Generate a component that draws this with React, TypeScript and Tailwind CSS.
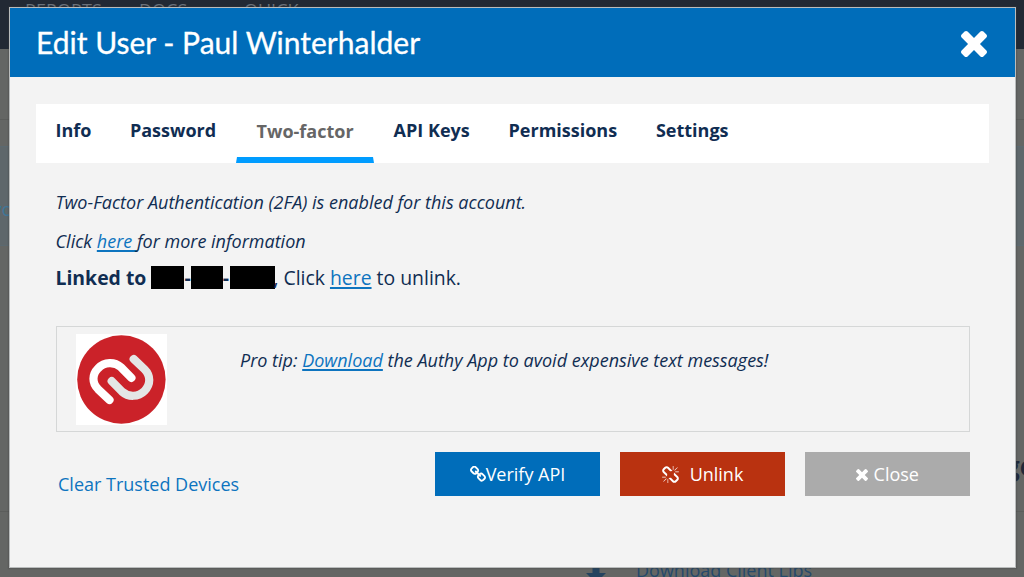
import type { ReactNode } from "react";

const TIMES =
  "M1490 1322q0 40-28 68l-136 136q-28 28-68 28t-68-28l-294-294-294 294q-28 28-68 28t-68-28l-136-136q-28-28-28-68t28-68l294-294-294-294q-28-28-28-68t28-68l136-136q28-28 68-28t68 28l294 294 294-294q28-28 68-28t68 28l136 136q28 28 28 68t-28 68l-294 294 294 294q28 28 28 68z";
const CHAIN =
  "M1520 1216q0-40-28-68l-208-208q-28-28-68-28-42 0-72 32 3 3 19 18.5t21.5 21.5 15 19 13 25.5 3.5 27.5q0 40-28 68t-68 28q-15 0-27.5-3.5t-25.5-13-19-15-21.5-21.5-18.5-19q-33 31-33 73 0 40 28 68l206 207q27 27 68 27 40 0 68-26l147-146q28-28 28-67zm-703-705q0-40-28-68l-206-207q-28-28-68-28-39 0-68 27l-147 146q-28 28-28 67 0 40 28 68l208 208q27 27 68 27 42 0 72-31-3-3-19-18.5t-21.5-21.5-15-19-13-25.5-3.5-27.5q0-40 28-68t68-28q15 0 27.5 3.5t25.5 13 19 15 21.5 21.5 18.5 19q33-31 33-73zm895 705q0 120-85 203l-147 146q-83 83-203 83-121 0-204-85l-206-207q-83-83-83-203 0-123 88-209l-88-88q-86 88-208 88-120 0-204-84l-208-208q-84-84-84-204t85-203l147-146q83-83 203-83 121 0 204 85l206 207q83 83 83 203 0 123-88 209l88 88q86-88 208-88 120 0 204 84l208 208q84 84 84 204z";
const CHAIN_BROKEN =
  "M503 1271l-256 256q-10 9-23 9-12 0-23-9-9-10-9-23t9-23l256-256q10-9 23-9t23 9q9 10 9 23t-9 23zm169 41v320q0 14-9 23t-23 9-23-9-9-23v-320q0-14 9-23t23-9 23 9 9 23zm-224-224q0 14-9 23t-23 9h-320q-14 0-23-9t-9-23 9-23 23-9h320q14 0 23 9t9 23zm1264 128q0 120-85 203l-147 146q-83 83-203 83-121 0-204-85l-334-335q-21-21-42-56l239-18 273 274q28 28 68 27.5t68-27.5l147-146q28-28 28-67 0-40-28-68l-274-275 18-239q35 21 56 42l336 336q84 86 84 204zm-617-724l-239 18-273-274q-28-28-68-28-39 0-68 27l-147 146q-28 28-28 67 0 40 28 68l274 274-18 240q-35-21-56-42l-336-336q-84-86-84-204 0-120 85-203l147-146q83-83 203-83 121 0 204 85l334 335q21 21 42 56zm633 84q0 14-9 23t-23 9h-320q-14 0-23-9t-9-23 9-23 23-9h320q14 0 23 9t9 23zm-544-544v320q0 14-9 23t-23 9-23-9-9-23v-320q0-14 9-23t23-9 23 9 9 23zm407 151l-256 256q-11 9-23 9t-23-9q-9-10-9-23t9-23l256-256q10-9 23-9t23 9q9 10 9 23t-9 23z";

function Glyph({ d, box, className }: { d: string; box: string; className: string }) {
  return (
    <svg viewBox={box} fill="currentColor" aria-hidden="true" className={`shrink-0 ${className}`}>
      <path d={d} />
    </svg>
  );
}

function AuthyLogo() {
  return (
    <svg viewBox="0 0 91 91" fill="none" strokeLinecap="round" className="h-[91px] w-[91px] shrink-0 bg-white">
      <circle cx="45.4" cy="45.5" r="44.2" fill="#cb2229" />
      <path d="M57.7 25 L68.6 35.4 C74.8 41.6 74.8 50.6 68.6 56.8 C62.3 63.3 52.3 63.3 46 57.6 L35.7 47.2" stroke="#e4e6e5" strokeWidth="8.2" />
      <path d="M33.5 66 L22.1 55.2 C15.9 49 15.9 40.6 22.1 34.4 C28.4 27.6 38.6 27.6 45 33.3 L55.4 43.8" stroke="#fff" strokeWidth="8.2" />
    </svg>
  );
}

function Tab({ children }: { children: ReactNode }) {
  return <button className="pt-[13px] text-[18px] leading-[26px] font-bold text-[#102d52]">{children}</button>;
}

function Link({ children }: { children: ReactNode }) {
  return (
    <a href="#" className="text-[#0d74bf] underline decoration-[1.5px] underline-offset-2">
      {children}
    </a>
  );
}

function PageBehind() {
  return (
    <div className="flex h-full flex-col bg-[#646664]">
      <div className="flex h-[49px] shrink-0 items-start bg-[#222934] pl-[25px] text-[18px] leading-[20px] text-[#6b717a]">
        <span className="w-[114px]">REPORTS</span>
        <span className="w-[105px]">DOCS</span>
        <span>QUICK</span>
      </div>
      <div className="h-[71px] shrink-0 border-b border-[#5b5d5b]" />
      <div className="h-[26px] shrink-0" />
      <div className="flex h-[100px] shrink-0 items-center overflow-hidden border-y border-[#5b6970] bg-[#5e676b]">
        <span className="-ml-[8px] pt-[27px] text-[19px] text-[#3e7698]">yo</span>
      </div>
      <div className="flex h-[266px] shrink-0 items-start justify-end overflow-hidden border-b border-[#5b5d5b] pt-[200px]">
        <span className="-mr-[11px] text-[26px] leading-[40px] font-bold text-[#20283a]">ge</span>
      </div>
      <div className="flex min-h-0 grow items-end overflow-hidden pl-[585px]">
        <svg viewBox="0 0 22 22" className="-mb-[6px] h-[22px] w-[22px] shrink-0" fill="#24435f">
          <path d="M7.5 0h7v12h6.5L11 22 1 12h6.5z" />
        </svg>
        <span className="-mb-[6px] ml-[29px] text-[18px] leading-[26px] whitespace-nowrap text-[#24496b]">
          Download Client Libs
        </span>
      </div>
    </div>
  );
}

export default function App() {
  return (
    <div className="relative h-[577px] w-[1024px] overflow-hidden font-['Open_Sans','Noto_Sans',sans-serif] text-[#102d52]">
      <PageBehind />
      <div
        role="dialog"
        className="absolute top-[7px] left-[9px] flex h-[561px] w-[1007px] flex-col border border-[#b9bcbc] bg-[#f3f3f3] shadow-[0_0_1px_1px_rgba(60,60,60,0.25)]"
      >
        <header className="flex h-[69px] shrink-0 items-center justify-between bg-[#006dba] pr-[28px] pl-[26px] text-white">
          <h1 className="-mt-[2px] font-['Lato',sans-serif] text-[30px] leading-[40px] whitespace-nowrap [-webkit-text-stroke:0.3px_white]">
            Edit User - Paul Winterhalder
          </h1>
          <Glyph d={TIMES} box="302 366 1188 1188" className="mt-[2px] h-[26px] w-[26px]" />
        </header>
        <div className="flex grow flex-col pt-[27px] pr-[26px] pl-[26px]">
          <nav className="flex h-[59px] shrink-0 items-start bg-white pl-[19.5px]">
            <div className="flex gap-[38.5px]">
              <Tab>Info</Tab>
              <Tab>Password</Tab>
            </div>
            <button className="mr-[20px] ml-[19.5px] h-[59px] w-[138px] border-x-[1.5px] border-b-[6px] border-x-transparent border-b-[#009cff] pt-[1px] pl-[1px] text-[18px] leading-[26px] font-bold text-[#666]">
              Two-factor
            </button>
            <div className="flex gap-[38.8px]">
              <Tab>API Keys</Tab>
              <Tab>Permissions</Tab>
              <Tab>Settings</Tab>
            </div>
          </nav>
          <div className="flex grow flex-col pr-[19px] pl-[19.5px]">
            <p className="mt-[26px] text-[18px] leading-[26px] italic">
              Two-Factor Authentication (2FA) is enabled for this account.
            </p>
            <p className="mt-[13px] text-[18px] leading-[26px] italic">
              Click <Link>here </Link>for more information
            </p>
            <p className="mt-[10px] flex items-center text-[19.4px] leading-[28px] whitespace-pre">
              <strong>Linked to </strong>
              <span className="-mt-[1px] h-[23px] w-[33px] bg-black" />
              <strong>-</strong>
              <span className="-mt-[1px] h-[23px] w-[32px] bg-black" />
              <strong>-</strong>
              <span className="-mt-[1px] ml-[1px] h-[23px] w-[45px] bg-black" />
              <span className="-ml-[1.5px]">, Click </span>
              <Link>here</Link>
              <span> to unlink.</span>
            </p>
            <section className="mt-[34px] flex h-[106px] shrink-0 items-start border border-[#d5d7d7] pt-[7px] pl-[19.5px]">
              <AuthyLogo />
              <p className="mt-[13px] ml-[73px] text-[18px] leading-[26px] italic">
                Pro tip: <Link>Download</Link> the Authy App to avoid expensive text messages!
              </p>
            </section>
            <div className="mt-[20px] flex h-[44px] shrink-0 text-[18px] text-white">
              <a href="#" className="mt-[19px] ml-[2.5px] w-[377px] leading-[26px] text-[#0d74bf]">
                Clear Trusted Devices
              </a>
              <button className="flex w-[165px] items-center justify-center bg-[#006dba]">
                <Glyph d={CHAIN} box="80 80 1632 1570" className="h-[16px] w-[16px]" />
                Verify API
              </button>
              <button className="ml-[20px] flex w-[165px] items-center justify-center gap-[11px] bg-[#b93210]">
                <Glyph d={CHAIN_BROKEN} box="64 0 1664 1664" className="h-[17px] w-[17px]" />
                Unlink
              </button>
              <button className="ml-[19.5px] flex w-[165.5px] items-center justify-center gap-[6px] bg-[#ababab]">
                <Glyph d={TIMES} box="302 366 1188 1188" className="mt-[2px] h-[12px] w-[12px]" />
                Close
              </button>
            </div>
          </div>
        </div>
      </div>
    </div>
  );
}
